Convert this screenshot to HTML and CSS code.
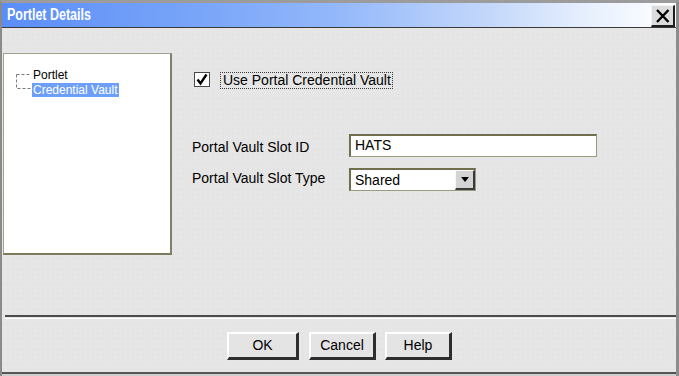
FILE: index.html
```html
<!DOCTYPE html>
<html>
<head>
<meta charset="utf-8">
<title>Portlet Details</title>
<link rel="stylesheet" href="styles.css">
</head>
<body>
<div class="window">
  <div class="titlebar">
    <span class="title">Portlet Details</span>
    <span class="close">
      <svg width="18" height="16" viewBox="0 0 18 16"><path d="M3 2 L14.5 14 M14.5 2 L3 14" stroke="#000" stroke-width="2.4" fill="none"/></svg>
    </span>
  </div>
  <div class="main">
    <div class="tree">
      <svg class="connector" width="16" height="30" viewBox="0 0 16 30"><path d="M0.5 6.5 H15 M0.5 6.5 V20.5 H15" stroke="#7a7a7a" stroke-width="1" stroke-dasharray="3 2" fill="none"/></svg>
      <div class="items">
        <div class="item">Portlet</div>
        <div class="item selected">Credential Vault</div>
      </div>
    </div>
    <div class="form">
      <div class="check-row">
        <span class="checkbox">
          <svg width="14" height="13" viewBox="0 0 14 13"><path d="M2.5 6.5 L5.5 10.5 L11.5 1.5" stroke="#000" stroke-width="2.4" fill="none"/></svg>
        </span>
        <span class="check-label">Use Portal Credential Vault</span>
      </div>
      <div class="fields">
        <span class="field-label label-id">Portal Vault Slot ID</span>
        <span class="textbox">HATS</span>
        <span class="field-label label-type">Portal Vault Slot Type</span>
        <span class="select"><span class="select-value">Shared</span><span class="arrow"><svg width="10" height="6" viewBox="0 0 10 6"><path d="M1 0 H9 L5 5 Z" fill="#000"/></svg></span></span>
      </div>
    </div>
  </div>
  <div class="separator"></div>
  <div class="buttons">
    <span class="btn btn-ok">OK</span>
    <span class="btn btn-cancel">Cancel</span>
    <span class="btn btn-help">Help</span>
  </div>
  <div class="bottom"></div>
</div>
</body>
</html>
```
FILE: styles.css
```css
html, body {
  margin: 0;
  padding: 0;
}
body {
  width: 679px;
  height: 376px;
  overflow: hidden;
  font-family: "Liberation Sans", Arial, sans-serif;
  color: #000;
}
.window {
  box-sizing: border-box;
  width: 679px;
  height: 376px;
  border-top: 3px solid #9c9c9c;
  border-left: 2px solid #8a8a8a;
  border-right: 3px solid #8c8c8c;
  display: flex;
  flex-direction: column;
  background-color: #e6e6e6;
  background-image: radial-gradient(circle at 1px 1px, #dcdcdc 0.5px, transparent 0.8px);
  background-size: 5px 5px;
}
.titlebar {
  box-sizing: border-box;
  height: 25px;
  flex: none;
  border-bottom: 1px solid #3a3a3a;
  background: linear-gradient(to right, #5a8df8 0%, #7aa6f9 30%, #94b8fa 50%, #c3d7fb 72%, #e9f1fe 88%, #ffffff 100%);
  display: flex;
  align-items: flex-start;
  justify-content: space-between;
  padding: 0 1px 0 5px;
}
.title {
  display: inline-block;
  font-weight: bold;
  font-size: 16px;
  line-height: 19px;
  margin-top: 2px;
  color: #fff;
  transform: scaleX(0.78);
  transform-origin: left center;
}
.close {
  box-sizing: border-box;
  width: 24px;
  height: 22px;
  margin-top: 2px;
  background: #dcdcdc;
  border-style: solid;
  border-width: 1px 2px 2px 1px;
  border-color: #f4f4f4 #1e1e1e #1e1e1e #f4f4f4;
  display: flex;
  align-items: center;
  justify-content: center;
}
.close svg {
  display: block;
}
.main {
  height: 287px;
  flex: none;
  display: flex;
  align-items: flex-start;
}
.tree {
  box-sizing: border-box;
  width: 169px;
  height: 202px;
  margin: 25px 0 0 1px;
  background: #fff;
  border-style: solid;
  border-width: 1px 2px 2px 1px;
  border-color: #a3a393 #80806a #7c7c5c #a3a393;
  padding: 14px 0 0 12px;
  display: flex;
  align-items: flex-start;
}
.connector {
  display: block;
  flex: none;
}
.items {
  font-size: 12px;
  line-height: 15px;
}
.item {
  height: 15px;
  padding: 0 1px;
}
.item.selected {
  height: 14px;
  line-height: 14px;
  background: #6e9ff8;
  color: #fff;
}
.form {
  margin-left: 20px;
  padding-top: 44px;
  font-size: 14px;
}
.check-row {
  display: flex;
  align-items: flex-start;
}
.checkbox {
  box-sizing: border-box;
  width: 16px;
  height: 15px;
  margin-left: 2px;
  border: 1px solid #4a4a4a;
  background: #fff;
  display: flex;
  align-items: center;
  justify-content: center;
}
.checkbox svg {
  display: block;
}
.check-label {
  margin-left: 10px;
  border: 1px dotted #3a3a3a;
  padding: 0 1px 0 2px;
  line-height: 15px;
}
.fields {
  margin-top: 45px;
  display: grid;
  grid-template-columns: 157px auto;
  row-gap: 11px;
  align-items: center;
}
.field-label {
  line-height: 16px;
}
.label-id {
  padding-top: 2px;
}
.label-type {
  padding-bottom: 3px;
}
.textbox, .select {
  box-sizing: border-box;
  height: 23px;
  background: #fff;
  border-style: solid;
  border-width: 2px 1px 1px 2px;
  border-color: #6f6f4f #9a9a7e #9a9a7e #6f6f4f;
  line-height: 19px;
}
.textbox {
  width: 248px;
  padding-left: 4px;
}
.select {
  width: 127px;
  display: flex;
  align-items: center;
  justify-content: space-between;
  padding-left: 4px;
}
.select-value {
  line-height: 19px;
  padding-top: 1px;
}
.arrow {
  box-sizing: border-box;
  width: 20px;
  height: 20px;
  background: #d4d4d4;
  border-style: solid;
  border-width: 1px 2px 2px 1px;
  border-color: #f8f8f8 #3a3a3a #3a3a3a #f8f8f8;
  display: flex;
  align-items: center;
  justify-content: center;
}
.arrow svg {
  display: block;
}
.separator {
  box-sizing: border-box;
  height: 4px;
  flex: none;
  margin: 0 0 0 3px;
  border-top: 2px solid #4c4c4c;
  border-bottom: 1px solid #ffffff;
}
.buttons {
  box-sizing: border-box;
  height: 53px;
  flex: none;
  display: flex;
  justify-content: center;
  align-items: flex-start;
  padding: 13px 0 0 1px;
}
.btn {
  box-sizing: border-box;
  height: 28px;
  background: #e4e4e4;
  border-style: solid;
  border-width: 2px 3px 3px 2px;
  border-color: #ffffff #2e2e2e #2e2e2e #ffffff;
  font-size: 14px;
  line-height: 23px;
  text-align: center;
}
.btn-ok {
  width: 72px;
  margin-right: 10px;
}
.btn-cancel {
  width: 67px;
  margin-right: 9px;
}
.btn-help {
  width: 67px;
}
.bottom {
  height: 2px;
  flex: none;
  border-top: 2px solid #555555;
  background: #cfcfcf;
}
```
